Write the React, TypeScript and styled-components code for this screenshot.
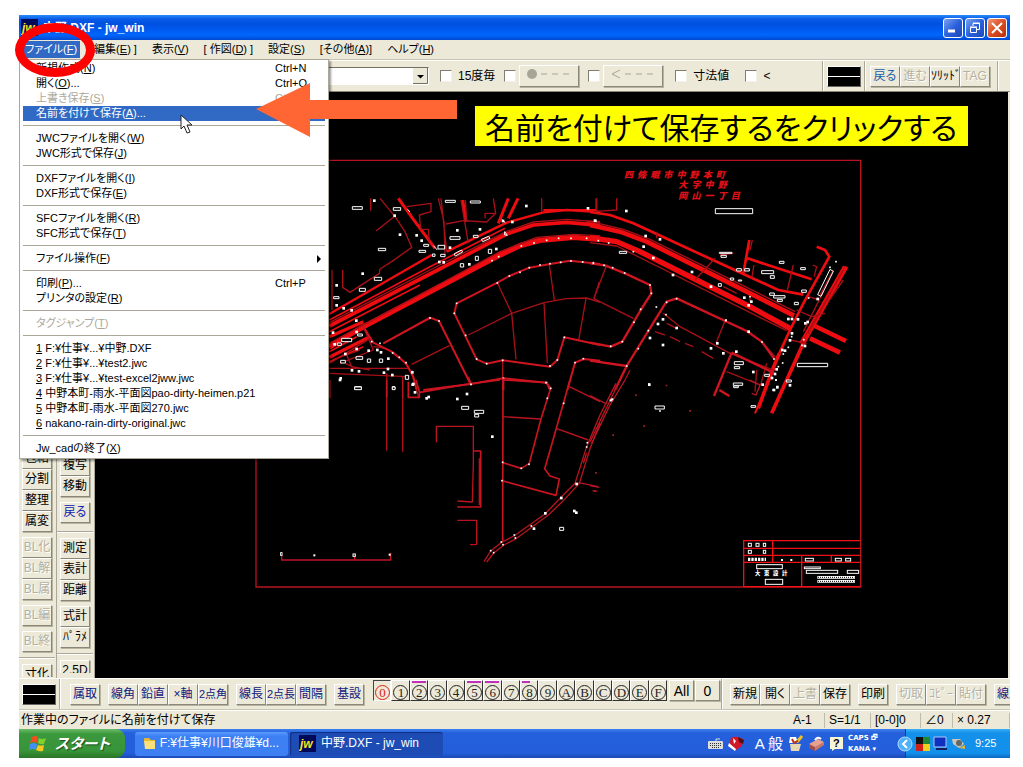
import React from 'react';
import styled, { createGlobalStyle, css } from 'styled-components';

const GlobalStyle = createGlobalStyle`
  *, *::before, *::after { box-sizing: border-box; }
  body {
    margin: 0;
    background: #fff;
    color: #000;
    font: 11px/15px "Liberation Sans", "Noto Sans CJK JP", sans-serif;
    font-feature-settings: "palt";
  }
  button, input, select { font: inherit; color: inherit; font-feature-settings: inherit; margin: 0; }
`;

const face = '#ece9d8';

const Page = styled.main`
  min-height: 100vh;
  padding: 15px 13px 9px 19px;
  display: flex;
  flex-direction: column;
`;
const Win = styled.div`
  position: relative;
  flex: 1;
  display: flex;
  flex-direction: column;
  background: ${face};
`;

/* ---------- title bar ---------- */
const TitleBar = styled.header`
  display: flex;
  align-items: center;
  gap: 5px;
  height: 25px;
  padding: 0 3px 0 2px;
  color: #fff;
  background: linear-gradient(#2b8cf8 0, #0a5ce8 4px, #0050e0 9px, #0058ee 14px, #0066fc 20px, #0048d0 25px);
`;
const Title = styled.h1`
  flex: 1;
  margin: 0;
  font: bold 12px/16px "Liberation Sans", "Noto Sans CJK JP", sans-serif;
`;
const Caption = styled.button<{ $red?: boolean }>`
  width: 20px;
  height: 20px;
  margin-left: -3px;
  padding: 0;
  display: grid;
  place-items: center;
  border: 1px solid #fff;
  border-radius: 3px;
  background: ${p => (p.$red
    ? 'linear-gradient(135deg, #f09878, #dc4c22 50%, #b83008)'
    : 'linear-gradient(135deg, #7ba2f0, #2b61dc 50%, #1c48b8)')};
`;
const Badge = styled.svg`display: block; flex: none;`;

/* ---------- menu bar ---------- */
const MenuBar = styled.nav`
  position: relative;
  display: flex;
  align-items: center;
  gap: 15px;
  height: 20px;
  padding-left: 3px;
  border-bottom: 1px solid #c8c4b4;
`;
const MenuTitle = styled.button<{ $open?: boolean }>`
  height: 17px;
  padding: 0;
  border: 0;
  background: none;
  white-space: nowrap;
  ${p => p.$open && css`
    width: 58px;
    margin-right: -7px;
    padding-left: 3px;
    text-align: left;
    background: #316ac5;
    color: #fff;
  `}
`;
const Menu = styled.ul`
  position: absolute;
  z-index: 2;
  left: 0;
  top: 19px;
  width: 310px;
  margin: 0;
  padding: 1px 3px 2px;
  list-style: none;
  background: #fff;
  border: 1px solid #aca899;
  box-shadow: 2px 2px 2px #0006;
`;
const Rule = styled.li`
  height: 10px;
  padding-top: 4px;
  &::after { content: ''; display: block; border-top: 1px solid #aca899; }
`;
const MenuItem = styled.button<{ $hot?: boolean }>`
  display: flex;
  width: 100%;
  height: 15px;
  padding: 0 3px 0 13px;
  border: 0;
  text-align: left;
  white-space: nowrap;
  background: ${p => (p.$hot ? '#316ac5' : 'none')};
  color: ${p => (p.$hot ? '#fff' : '#000')};
  &:disabled { color: #aca899; }
`;
const ItemName = styled.span`flex: 1;`;
const Shortcut = styled.span`width: 47px;`;
const SubArrow = styled.svg`margin-top: 4px;`;

/* ---------- tool bars ---------- */
const raised = css`
  border: 1px solid;
  border-color: #fff #8a8778 #8a8778 #fff;
  box-shadow: 1px 1px 0 #b8b4a2;
`;
const ToolBar = styled.div`
  display: flex;
  align-items: center;
  height: 32px;
  border-top: 1px solid #fff;
  border-bottom: 1px solid #8a8778;
`;
const Spacer = styled.div`flex: 1;`;
const Divider = styled.span`
  flex: none;
  align-self: stretch;
  width: 2px;
  border-left: 1px solid #aca899;
  border-right: 1px solid #fff;
`;
const Combo = styled.div`
  position: relative;
  width: 309px;
  margin: 0 11px 0 101px;
`;
const Select = styled.select`
  display: block;
  width: 100%;
  height: 18px;
  appearance: none;
  border: 1px solid;
  border-color: #716f64 #fff #fff #716f64;
  border-radius: 0;
  background: #fff;
`;
const DropMark = styled.svg`
  position: absolute;
  right: 1px;
  top: 1px;
  pointer-events: none;
`;
const Check = styled.label`
  display: flex;
  align-items: center;
  gap: 6px;
  white-space: nowrap;
  font-size: 12px;
`;
const Box = styled.input`
  appearance: none;
  width: 12px;
  height: 12px;
  background: #fff;
  border: 1px solid;
  border-color: #807e70 #f4f2e8 #f4f2e8 #807e70;
`;
const CheckSet = styled.div`
  display: flex;
  align-items: center;
  gap: 9px;
`;
const WithTool = styled.div`
  display: flex;
  align-items: center;
  gap: 3px;
`;
const Mode = styled.button`
  ${raised}
  width: 60px;
  height: 22px;
  padding: 0 6px;
  background: ${face};
`;
const Swatch = styled.button`
  flex: none;
  width: 34px;
  height: 21px;
  margin: 0 3px;
  padding: 0;
  border: 1px solid;
  border-color: #fff #666 #666 #fff;
  background: linear-gradient(#000 9px, #fff 9px, #fff 10px, #000 10px);
`;
const Tool = styled.button<{ $ink?: string; $small?: boolean }>`
  ${raised}
  flex: none;
  width: 30px;
  height: 21px;
  padding: 0;
  overflow: hidden;
  white-space: nowrap;
  text-align: center;
  font-size: ${p => (p.$small ? 11 : 12)}px;
  background: ${face};
  color: ${p => p.$ink || '#000'};
  &:disabled { color: #b4b1a2; text-shadow: 1px 1px #fff; }
`;
const Group = styled.div<{ $left?: number }>`
  flex: none;
  display: flex;
  margin-left: ${p => p.$left ?? 8}px;
`;
const EdgeGroup = styled(Group)`
  align-self: stretch;
  margin-right: 11px;
`;

/* ---------- work area ---------- */
const Work = styled.div`
  display: flex;
  flex: 1;
`;
const Column = styled.div<{ $top: number }>`
  flex: none;
  width: 38px;
  padding: ${p => p.$top}px 0 0 3px;
  border-right: 1px solid #aca899;
  display: flex;
  flex-direction: column;
`;
const Stack = styled.div<{ $after?: number }>`
  display: flex;
  flex-direction: column;
  margin-bottom: ${p => p.$after ?? 5}px;
`;
const Line = styled.hr`
  width: 36px;
  height: 2px;
  margin: 0 0 5px -3px;
  border: 0;
  border-top: 1px solid #aca899;
  background: #fff;
`;
const Cut = styled.div`
  height: 13px;
  overflow: hidden;
`;
const Canvas = styled.section`
  flex: 1;
  min-width: 0;
  margin-right: 2px;
  background: #000;
`;
const Plan = styled.svg`
  display: block;
  width: 100%;
`;

/* ---------- bottom bars ---------- */
const BottomBar = styled.div`
  display: flex;
  align-items: center;
  height: 32px;
  overflow: hidden;
  border-top: 1px solid #fff;
  border-bottom: 1px solid #c8c4b4;
`;
const Layers = styled.div`
  flex: none;
  display: grid;
  grid-template-columns: repeat(16, 1fr);
  width: 294px;
  align-self: flex-start;
  margin: 1px 2px 0 3px;
`;
const Layer = styled.button<{ $mark?: number; $on?: boolean }>`
  position: relative;
  height: 21px;
  padding: 3px 0 0 1px;
  border: 1px solid;
  border-color: ${p => (p.$on ? '#444 #fff #fff #444' : '#fff #333 #333 #fff')};
  background: ${face};
  color: ${p => (p.$on ? '#e02010' : '#222')};
  &::before {
    content: '';
    position: absolute;
    left: 1px;
    top: 0;
    width: ${p => p.$mark || 0}px;
    height: 2px;
    background: #c030b8;
  }
`;
const Ring = styled.span`
  display: block;
  width: 15px;
  height: 15px;
  border: 1px solid;
  border-radius: 50%;
  text-align: center;
  font: 13px/13px "Liberation Serif", serif;
`;
const Wide = styled(Tool)`
  width: 25px;
  margin-right: 1px;
  align-self: flex-start;
  margin-top: 1px;
  font: 14px/16px "Liberation Sans", sans-serif;
`;
const StatusBar = styled.footer`
  display: flex;
  align-items: center;
  height: 19px;
  padding-left: 2px;
  border-top: 1px solid #fff;
  font-size: 12px;
`;
const Cell = styled.span<{ $w: number }>`
  width: ${p => p.$w}px;
  padding-left: 4px;
  border-right: 1px solid #c0bcac;
  white-space: nowrap;
`;
const TaskBar = styled.div`
  display: flex;
  align-items: center;
  height: 29px;
  color: #fff;
  background: linear-gradient(#3c80f0 0, #2560dc 4px, #245edb 24px, #1c48b0 29px);
`;
const Start = styled.button`
  display: flex;
  align-items: center;
  gap: 8px;
  width: 106px;
  height: 29px;
  padding: 0 0 0 10px;
  border: 0;
  border-radius: 0 9px 9px 0;
  color: #fff;
  font: italic bold 15px/20px "Liberation Sans", "Noto Sans CJK JP", sans-serif;
  font-feature-settings: "palt";
  text-shadow: 1px 1px 1px #1c4c1c;
  background: linear-gradient(#6cbc68 0, #3c983c 5px, #389438 22px, #2a7428 29px);
`;
const Task = styled.button<{ $on?: boolean }>`
  display: flex;
  align-items: center;
  gap: 5px;
  width: 153px;
  height: 24px;
  margin-left: ${p => (p.$on ? 2 : 10)}px;
  padding: 0 9px;
  border: 0;
  border-radius: 3px;
  white-space: nowrap;
  color: #fff;
  font-size: 12px;
  background: ${p => (p.$on ? '#1c4cb4' : 'linear-gradient(#5c9cfc, #3c80f4 4px, #3c80f4)')};
  box-shadow: ${p => (p.$on ? 'inset 1px 1px 1px #103080' : 'none')};
`;
const Ime = styled.div`
  display: flex;
  align-items: center;
  gap: 5px;
  margin-right: 21px;
`;
const ImeMode = styled.span`
  margin-left: 5px;
  font-size: 15px;
`;
const Locks = styled.span`
  width: 36px;
  font: bold 7px/11px "DejaVu Sans", sans-serif;
  white-space: nowrap;
`;
const Tray = styled.div`
  display: flex;
  align-items: center;
  gap: 3px;
  width: 105px;
  height: 29px;
  background: linear-gradient(#38b0f8 0, #1490e8 4px, #1290ec 24px, #0c68c0 29px);
  border-left: 1px solid #0c3c98;
`;
const Chevron = styled.svg`margin-left: -9px;`;
const Clock = styled.time`margin-left: 6px;`;

/* ---------- annotations ---------- */
const Oval = styled.div`
  position: absolute;
  z-index: 4;
  left: -4px;
  top: 8px;
  width: 80px;
  height: 54px;
  border: 9px solid #f00;
  border-radius: 50%;
  pointer-events: none;
`;
const Arrow = styled.svg`
  position: absolute;
  z-index: 4;
  left: 237px;
  top: 68px;
`;
const Pointer = styled.svg`
  position: absolute;
  z-index: 5;
  left: 161px;
  top: 99px;
`;
const Note = styled.p`
  position: absolute;
  z-index: 3;
  left: 456px;
  top: 91px;
  width: 493px;
  height: 40px;
  margin: 0;
  padding-left: 10px;
  background: #ff0;
  font: 30px/40px "Noto Sans CJK JP", sans-serif;
  font-feature-settings: "palt";
  white-space: nowrap;
`;

type Entry = { name: string; k?: string; tail?: string; keys?: string; off?: boolean; hot?: boolean; sub?: boolean; pre?: boolean };
const entries: (Entry | null)[] = [
  { name: '新規作成', k: 'N', keys: 'Ctrl+N' },
  { name: '開く', k: 'O', tail: '...', keys: 'Ctrl+O' },
  { name: '上書き保存', k: 'S', keys: 'Ctrl+S', off: true },
  { name: '名前を付けて保存', k: 'A', tail: '...', hot: true },
  null,
  { name: 'JWCファイルを開く', k: 'W' },
  { name: 'JWC形式で保存', k: 'J' },
  null,
  { name: 'DXFファイルを開く', k: 'I' },
  { name: 'DXF形式で保存', k: 'E' },
  null,
  { name: 'SFCファイルを開く', k: 'R' },
  { name: 'SFC形式で保存', k: 'T' },
  null,
  { name: 'ファイル操作', k: 'F', sub: true },
  null,
  { name: '印刷', k: 'P', tail: '...', keys: 'Ctrl+P' },
  { name: 'プリンタの設定', k: 'R' },
  null,
  { name: 'タグジャンプ', k: 'T', off: true },
  null,
  { name: ' F:¥仕事¥...¥中野.DXF', k: '1', pre: true },
  { name: ' F:¥仕事¥...¥test2.jwc', k: '2', pre: true },
  { name: ' F:¥仕事¥...¥test-excel2jww.jwc', k: '3', pre: true },
  { name: ' 中野本町-雨水-平面図pao-dirty-heimen.p21', k: '4', pre: true },
  { name: ' 中野本町-雨水-平面図270.jwc', k: '5', pre: true },
  { name: ' nakano-rain-dirty-original.jwc', k: '6', pre: true },
  null,
  { name: 'Jw_cadの終了', k: 'X' },
];

const JwIcon = () => (
  <Badge width="17" height="17" viewBox="0 0 17 17">
    <rect width="17" height="17" fill="#000858" />
    <text x="1" y="13" fill="#ffe020" fontFamily="Liberation Sans, sans-serif" fontWeight="bold" fontStyle="italic" fontSize="12">jw</text>
  </Badge>
);

const Tools = ({ names, off, ink }: { names: string[]; off?: boolean; ink?: string }) => (
  <>{names.map(n => <Tool key={n} disabled={off} $ink={ink} $small={n.startsWith('2点')}>{n}</Tool>)}</>
);

type Rect = [number, number, number, number];
const Tags = ({ list }: { list: Rect[] }) => (
  <g fill="#000" stroke="#fff" strokeWidth="3">
    {list.map(([x, y, w, h], i) => <rect key={i} x={x} y={y} width={w} height={h} />)}
  </g>
);
const Dots = ({ list, size = 6 }: { list: [number, number][]; size?: number }) => (
  <g fill="#fff">
    {list.map(([x, y], i) => <rect key={i} x={x - size / 2} y={y - size / 2} width={size} height={size} />)}
  </g>
);

const SitePlan = () => (
  <Plan viewBox="0 0 2739 1758" role="img" aria-label="中野 平面図">
    <g fill="none" stroke="#c01424" strokeWidth="4">
      <path d="M483 205H2297V1485H483Z" stroke="#b81420" />
      <path d="M560 1385V1404H887V1383M779 1390V1404" />
    </g>
    <Tags list={[[557, 1382, 4, 8], [774, 1386, 7, 7]]} />
    <Dots list={[[658, 1390], [884, 1388]]} />

    {/* north-west sheet */}
    <g transform="translate(675 174)" fill="none" strokeLinejoin="round">
      <g stroke="#ee0c10">
        <path strokeWidth="7" d="M28 492L335 315M380 305L560 218 670 187 740 180 840 186" />
        <path strokeWidth="11" d="M28 528L330 372 560 252 640 225 740 217 840 226" />
        <path strokeWidth="16" d="M28 592L60 570 140 525 540 315 600 287 660 271 760 262 840 268" />
        <path strokeWidth="10" d="M28 560L130 515M28 622L150 560" />
        <path strokeWidth="5" d="M28 510L330 350 555 235M28 545L300 405M28 635L130 590M28 605L110 560" />
        <path strokeWidth="9" d="M565 145L535 220M594 145L565 205M235 145L285 215 345 295M428 150L438 215" />
        <path strokeWidth="6" d="M670 180H830M800 215H840" />
      </g>
      <g stroke="#a81018" strokeWidth="4">
        <path d="M28 518L330 360 560 244 640 216 740 208 840 216M28 580L540 305 650 262 760 253 840 257" />
        <path d="M180 145L225 200 255 245 275 292 215 335 180 357 178 370 90 427 68 412V360M36 360V480M168 243L222 200M152 145V182" />
        <path d="M260 170L333 160V185L298 195 302 238H325L328 275M355 145L372 215 375 315M363 145L380 305M423 150L445 280M436 150L440 215M378 222L430 212 500 216 527 190 520 145M495 205V190H525M665 145V185M830 145V178" />
        <path d="M532 398L575 490 588 628M575 490L445 555M575 490L672 458 738 446 800 444 840 457M672 458L682 640M798 446L776 570M688 345L703 450M838 395L822 446M190 580L330 505M275 643L388 587" />
        <path d="M28 655H265M28 670L265 680M200 670V902M248 680V905M160 590Q230 590 275 670L297 745M60 640L160 600 130 530M75 640L110 655M120 600L80 615 95 650 150 660" />
        <path d="M548 630V720M28 640L150 565 160 578" />
      </g>
      <g stroke="#d01420" strokeWidth="6">
        <path d="M410 460L532 398 568 378 628 353 690 342 750 332 840 342M410 460L403 490 470 628 500 641 548 631 690 650 712 630 733 562 840 585" />
        <path d="M130 530L160 578 215 605 258 640 280 680 290 720M190 580L330 503 357 513 453 705M310 720L453 702 550 685 680 698 690 720M742 720L765 638 792 627 840 632M550 685V720" />
      </g>
      <Tags list={[[97, 170, 30, 8], [220, 173, 22, 8], [376, 151, 30, 6], [451, 153, 30, 6], [175, 295, 22, 7], [163, 382, 22, 9], [118, 415, 18, 9], [390, 260, 30, 8], [354, 286, 20, 11], [297, 301, 20, 6], [311, 283, 15, 6], [421, 341, 10, 10], [466, 319, 9, 12], [505, 298, 10, 12], [41, 440, 16, 6], [65, 565, 30, 10], [108, 620, 20, 8], [142, 627, 10, 10], [178, 627, 10, 10], [62, 631, 14, 8], [104, 710, 20, 8], [217, 710, 8, 8], [460, 256, 14, 6], [362, 313, 13, 7], [52, 579, 12, 7], [256, 676, 10, 12], [113, 552, 14, 6], [337, 312, 8, 7]]} />
      <g stroke="#fff" strokeWidth="3"><path d="M402 312L424 300 428 306 406 318ZM484 268L506 259 510 265 488 275ZM340 287L352 300M554 245L562 256 554 255ZM545 208L556 218M263 178L270 186" /></g>
      <Dots size={8} list={[[163, 152], [240, 254], [290, 256], [305, 272], [128, 371], [50, 406], [50, 466], [71, 475], [95, 481], [109, 512], [39, 548], [412, 241], [480, 238], [529, 297], [619, 168], [804, 175], [549, 213], [577, 216], [390, 293], [448, 343], [358, 336], [371, 337], [172, 600], [183, 607], [205, 626], [62, 685], [96, 661], [117, 664], [192, 668], [204, 657], [217, 675], [277, 667], [280, 702], [110, 546], [110, 597], [146, 602], [76, 612], [44, 583], [224, 197], [826, 213]]} />
      <Dots size={5} list={[[568, 378], [600, 367], [628, 353], [660, 345], [690, 341], [722, 337], [753, 333], [788, 336], [820, 338], [532, 399], [410, 460], [403, 490], [437, 556], [470, 627], [500, 641], [548, 631], [690, 648], [712, 630], [733, 562], [330, 504], [357, 513], [453, 703], [550, 685], [680, 698], [765, 638], [790, 626], [218, 609], [238, 622], [258, 638], [276, 665], [180, 580], [155, 575], [604, 288], [642, 279], [680, 271], [716, 265], [753, 265], [800, 265], [516, 332], [536, 320]]} />
    </g>

    {/* north-east sheet */}
    <g transform="translate(1485 174)" fill="none" strokeLinejoin="round">
      <g stroke="#ee0c10">
        <path strokeWidth="8" d="M0 186L60 195 130 220 460 372 565 420 640 434" />
        <path strokeWidth="14" d="M0 225L90 245 170 275 470 425 612 497" />
        <path strokeWidth="16" d="M0 263L80 275 150 305 320 390 480 470 600 535" />
        <path strokeWidth="14" d="M668 525L768 573M660 565L750 608" />
        <path strokeWidth="8" d="M478 270L460 370M680 290L705 300 718 320 640 460 600 540 568 610M472 325L665 388" />
        <path strokeWidth="11" d="M568 610L545 665 505 775M770 350L640 580 545 790" />
        <path strokeWidth="6" d="M553 655L495 790M762 348L630 580" />
      </g>
      <g stroke="#a81018" strokeWidth="4">
        <path d="M0 214L100 238 180 268 470 412 615 485M0 278L80 288 140 318 590 542M18 145V180M80 145V180L10 185M200 245V265M375 325L315 390M390 315L430 310M487 270L480 300M492 345L485 385M610 345L592 420M668 345L680 350 672 380M600 570L650 580M620 480L665 500 705 490M480 440V455M760 360L655 550M730 360L690 435M700 425L640 545M655 440L690 450" />
        <path d="M220 490L270 530 420 610 550 660M405 512L378 580M410 665L510 705M512 705L530 640M10 445L130 505M48 350L12 445M195 545L225 555M260 535L230 520M240 560L270 575M285 580L310 590M335 605L370 625M120 660L105 690M760 390L715 455M400 410L440 430M515 575L555 620M500 660L495 725" />
      </g>
      <g stroke="#d01420" strokeWidth="7">
        <path d="M0 340L45 346 105 370 180 405 184 430 152 480 97 575 62 590 0 578M0 632L110 648M75 720L110 648 220 470 230 455 260 445 470 543 515 575 552 625M425 608L372 738M425 608L550 668M388 720L418 738" />
      </g>
      <Tags list={[[376, 176, 112, 15], [88, 304, 22, 6], [388, 307, 38, 3], [393, 316, 16, 6], [440, 356, 14, 7], [464, 356, 14, 7], [515, 362, 36, 9], [541, 377, 12, 8], [568, 334, 14, 6], [632, 353, 14, 6], [539, 429, 14, 7], [551, 437, 34, 7], [562, 448, 15, 6], [635, 420, 14, 7], [613, 457, 12, 7], [622, 640, 91, 10], [433, 635, 27, 9], [433, 650, 16, 6], [430, 699, 28, 7], [431, 708, 14, 5], [445, 390, 10, 3], [421, 384, 10, 6], [524, 673, 14, 6], [589, 690, 15, 6], [385, 401, 9, 8], [195, 768, 28, 9], [483, 767, 14, 5]]} />
      <g stroke="#fff" strokeWidth="3"><path d="M683 434L720 358 730 364 693 439Z" /></g>
      <Dots size={8} list={[[109, 183], [167, 258], [210, 268], [161, 290], [190, 324], [306, 366], [249, 375], [363, 410], [463, 443], [484, 455], [476, 466], [204, 522], [219, 508], [260, 534], [180, 564], [219, 585], [363, 595], [400, 610], [439, 605], [382, 580], [476, 545], [178, 704], [490, 666], [555, 672], [560, 658], [606, 507], [595, 507], [624, 508], [646, 520], [653, 516], [577, 600], [585, 602], [600, 571], [606, 550], [645, 588], [683, 447], [518, 704], [546, 684], [65, 750], [562, 712], [15, 212], [600, 706], [552, 720]]} />
      <Dots size={5} list={[[10, 340], [42, 346], [68, 353], [104, 369], [180, 405], [184, 430], [152, 478], [132, 517], [97, 575], [62, 589], [110, 648], [145, 596], [175, 542], [230, 457], [260, 446], [199, 471], [407, 512], [516, 576], [552, 627], [605, 560], [595, 592], [580, 612], [565, 650], [578, 639], [656, 444], [720, 352], [738, 335], [480, 440], [641, 569], [636, 586], [228, 494], [408, 510], [210, 783], [130, 305], [25, 272], [56, 279]]} />
      <g fill="#e01018" fontFamily="Noto Sans CJK JP, sans-serif" fontWeight="900" fontStyle="italic" fontSize="27">
        <text x="102" y="84">四&#160;&#160;條&#160;&#160;畷&#160;&#160;市&#160;&#160;中&#160;&#160;野&#160;&#160;本&#160;&#160;町</text>
        <text x="265" y="114">大&#160;&#160;字&#160;&#160;中&#160;&#160;野</text>
        <text x="265" y="146">岡&#160;&#160;山&#160;&#160;一&#160;&#160;丁&#160;&#160;目</text>
      </g>
    </g>

    {/* south-west sheet */}
    <g transform="translate(675 864)" fill="none" strokeLinejoin="round">
      <g stroke="#c81420" strokeWidth="5">
        <path d="M549 -5L548 485M550 0L680 8 692 25 662 120 628 250 604 265 548 248M545 302L708 346 718 297 690 288 674 266 692 205 750 0M300 37L445 12 540 0M445 -10L453 12M462 213H482V381H412M265 5V52H298V35L288 0M200 0V52" />
      </g>
      <g stroke="#b81420" strokeWidth="4">
        <path d="M349 187V139H460V250L457 366 412 363M412 421H470V493L450 494M478 235V375M548 110L662 117M708 145L805 180M748 20L840 65M248 0V55M30 0V55" />
        <path d="M888 10L840 105 800 200 765 310 720 355 675 402 582 468 545 487 512 513 492 545M840 130L812 200 778 310 730 362 685 405 590 475 552 495 520 520 500 546" />
        <path d="M775 308L835 320M818 332L830 334M800 220L790 250" />
      </g>
      <Tags list={[[425, 79, 21, 9], [463, 91, 28, 9], [464, 103, 12, 8], [719, 442, 12, 9], [104, 21, 20, 8], [217, 21, 8, 8]]} />
      <Dots size={8} list={[[320, 55], [326, 51], [412, 57], [441, 42], [517, 170], [763, 393], [769, 398], [642, 446], [724, 354], [770, 312], [676, 400], [285, 37], [278, 14], [60, 0]]} />
      <Dots size={5} list={[[453, 13], [548, 247], [604, 265], [627, 253], [546, 302], [544, 486], [549, 494], [583, 465], [586, 474], [634, 438], [512, 512], [521, 518], [802, 188], [800, 201], [731, 70], [692, 25], [682, 55], [678, 8]]} />
    </g>

    {/* south-east sheet with the title block */}
    <g transform="translate(1485 864)" fill="none">
      <g stroke="#b81824" strokeWidth="4">
        <path d="M90 0L0 185M105 0L60 75 5 190M0 47L50 72M0 317L28 322M10 332L20 334M480 0L510 15 498 45 485 40" />
      </g>
      <path stroke="#f01018" strokeWidth="4" d="M461 620V482H811M461 505H811M461 526H811M461 547H811M548 482V547M635 526V620M724 526V547M461 620H811" />
      <g fill="#a82020"><path d="M227 14h5v5h-5zM135 43h5v5h-5zM298 90h5v5h-5zM160 136h5v5h-5zM67 163h5v5h-5zM15 276h5v5h-5z" /></g>
      <Tags list={[[475, 490, 9, 9], [498, 490, 9, 9], [520, 490, 7, 9], [475, 511, 9, 9], [520, 511, 7, 9], [500, 554, 77, 12], [526, 598, 52, 15], [646, 535, 24, 8], [643, 561, 48, 5], [649, 571, 94, 9], [736, 535, 18, 8], [767, 535, 15, 8], [772, 571, 34, 9]]} />
      <path stroke="#fff" strokeWidth="10" strokeDasharray="7 3" d="M474 538H528" />
      <path stroke="#fff" strokeWidth="8" d="M682 592H795M682 604H795" />
      <path stroke="#000" strokeWidth="3" strokeDasharray="3 3" d="M684 592H793M684 604H793" />
      <Dots list={[[576, 540], [604, 540], [558, 0], [550, 30], [562, 20], [177, 13], [62, 61], [67, 58]]} />
      <text x="495" y="585" fill="#fff" fontFamily="Noto Sans CJK JP, sans-serif" fontWeight="900" fontSize="16">大&#160;&#160;&#160;東&#160;&#160;&#160;設&#160;&#160;&#160;計</text>
    </g>
  </Plan>
);

const marks: Record<string, number> = { '2': 14, '5': 14, '6': 14, '8': 8 };

export default function App() {
  return (
    <Page>
      <GlobalStyle />
      <Win>
        <TitleBar>
          <JwIcon />
          <Title>中野.DXF - jw_win</Title>
          <Caption aria-label="最小化"><svg width="12" height="12"><path d="M1 9h7" stroke="#fff" strokeWidth="3" /></svg></Caption>
          <Caption aria-label="元に戻す"><svg width="12" height="12" fill="none" stroke="#fff"><path d="M4 4V1.5H10.500V7.500H8M1.500 5.500H7.500V10.500H1.500ZM1 5h7M4 1h7" /></svg></Caption>
          <Caption $red aria-label="閉じる"><svg width="12" height="12"><path d="M1 1L11 11M11 1L1 11" stroke="#fff" strokeWidth="2" /></svg></Caption>
        </TitleBar>

        <MenuBar>
          <MenuTitle $open>ファイル(<u>F</u>)</MenuTitle>
          <MenuTitle>[ 編集(<u>E</u>) ]</MenuTitle>
          <MenuTitle>表示(<u>V</u>)</MenuTitle>
          <MenuTitle>[ 作図(<u>D</u>) ]</MenuTitle>
          <MenuTitle>設定(<u>S</u>)</MenuTitle>
          <MenuTitle>[その他(<u>A</u>)]</MenuTitle>
          <MenuTitle>ヘルプ(<u>H</u>)</MenuTitle>
          <Menu>
            {entries.map((e, i) => (e === null ? <Rule key={i} /> : (
              <li key={i}>
                <MenuItem disabled={e.off} $hot={e.hot}>
                  <ItemName>{e.pre ? <><u>{e.k}</u>{e.name}</> : <>{e.name}(<u>{e.k}</u>){e.tail}</>}</ItemName>
                  {e.keys && <Shortcut>{e.keys}</Shortcut>}
                  {e.sub && <SubArrow width="5" height="8"><path d="M0 0L4 4 0 8Z" /></SubArrow>}
                </MenuItem>
              </li>
            )))}
          </Menu>
        </MenuBar>

        <ToolBar>
          <Combo>
            <Select aria-label="傾き"><option> </option></Select>
            <DropMark width="15" height="16">
              <path d="M0 0H15V16H0Z" fill={face} /><path d="M0 15.500H14.500V0" fill="none" stroke="#716f64" /><path d="M4 7H11L7.500 10.500Z" />
            </DropMark>
          </Combo>
          <CheckSet>
            <Check><Box type="checkbox" />15度毎</Check>
            <WithTool>
              <Box type="checkbox" aria-label="●---" />
              <Mode aria-label="始点マーク"><svg width="46" height="12"><circle cx="6" cy="6" r="5" fill="#a8a596" /><path d="M15 6h6M26 6h6M37 6h6" stroke="#a8a596" /></svg></Mode>
            </WithTool>
            <WithTool>
              <Box type="checkbox" aria-label="<---" />
              <Mode aria-label="矢印"><svg width="46" height="12"><path d="M10 2L2 6 10 10M15 6h6M26 6h6M37 6h6" fill="none" stroke="#a8a596" /></svg></Mode>
            </WithTool>
          </CheckSet>
          <Group $left={12}><Check><Box type="checkbox" />寸法値</Check></Group>
          <Group $left={16}><Check><Box type="checkbox" />&lt;</Check></Group>
          <Spacer />
          <Divider />
          <Swatch aria-label="線属性" />
          <Divider />
          <Group $left={4}>
            <Tool $ink="#2060a8">戻る</Tool>
            <Tool disabled>進む</Tool>
            <Tool>ｿﾘｯﾄﾞ</Tool>
            <Tool disabled>TAG</Tool>
          </Group>
          <EdgeGroup $left={7}><Divider /></EdgeGroup>
        </ToolBar>

        <Work>
          <Column $top={356}>
            <Stack><Tools names={['包絡', '分割', '整理', '属変']} /></Stack>
            <Stack><Tools off names={['BL化', 'BL解', 'BL属']} /></Stack>
            <Stack><Tools off names={['BL編']} /></Stack>
            <Stack><Tools off names={['BL終']} /></Stack>
            <Line />
            <Cut><Tools names={['寸化']} /></Cut>
          </Column>
          <Column $top={363}>
            <Stack><Tools names={['複写', '移動']} /></Stack>
            <Stack $after={8}><Tools ink="#1020b0" names={['戻る']} /></Stack>
            <Line />
            <Stack><Tools names={['測定', '表計', '距離']} /></Stack>
            <Stack><Tools names={['式計', 'ﾊﾟﾗﾒ']} /></Stack>
            <Line />
            <Cut><Tools names={['2.5D']} /></Cut>
          </Column>
          <Canvas><SitePlan /></Canvas>
        </Work>

        <BottomBar>
          <Swatch aria-label="線属性" />
          <Divider />
          <Group $left={4}><Divider /></Group>
          <Group $left={3}><Tools ink="#101880" names={['属取']} /></Group>
          <Group><Tools ink="#101880" names={['線角', '鉛直', '×軸', '2点角']} /></Group>
          <Group><Tools ink="#101880" names={['線長', '2点長', '間隔']} /></Group>
          <Group><Tools ink="#101880" names={['基設']} /></Group>
          <Group $left={4}><Divider /></Group>
          <Layers>
            {'0123456789ABCDEF'.split('').map(n => (
              <Layer key={n} $on={n === '0'} $mark={marks[n]}><Ring>{n}</Ring></Layer>
            ))}
          </Layers>
          <Wide>All</Wide>
          <Wide>0</Wide>
          <Divider />
          <Group $left={7}>
            <Tools names={['新規', '開く']} />
            <Tools off names={['上書']} />
            <Tools names={['保存']} />
          </Group>
          <Group><Tools names={['印刷']} /></Group>
          <Group><Tools off names={['切取', 'ｺﾋﾟｰ', '貼付']} /></Group>
          <Group><Tools ink="#101880" names={['線属']} /></Group>
        </BottomBar>

        <StatusBar>
          作業中のファイルに名前を付けて保存
          <Spacer />
          <Cell $w={36}>A-1</Cell>
          <Cell $w={46}>S=1/1</Cell>
          <Cell $w={50}>[0-0]0</Cell>
          <Cell $w={32}>∠0</Cell>
          <Cell $w={57}>× 0.27</Cell>
        </StatusBar>

        <TaskBar>
          <Start>
            <svg width="18" height="18" viewBox="0 0 18 18">
              <path d="M3 2Q6 0 9 2L8 8Q5 6 1 8Z" fill="#f05020" />
              <path d="M10 3Q13 5 17 3L15 9Q12 10 9 8Z" fill="#80d030" />
              <path d="M1 9Q4 7 8 9L7 15Q4 13 0 15Z" fill="#4090f8" />
              <path d="M9 10Q12 11 15 10L14 16Q11 17 7 15Z" fill="#f8c820" />
            </svg>
            スタート
          </Start>
          <Task>
            <svg width="14" height="13"><path d="M0 2Q0 1 1 1H5L7 3H12V5H0Z" fill="#e8b830" /><path d="M0 4H14L13 12H1Z" fill="#fce078" /></svg>
            F:¥仕事¥川口俊雄¥d...
          </Task>
          <Task $on><JwIcon />中野.DXF - jw_win</Task>
          <Spacer />
          <Ime>
            <svg width="15" height="11"><rect x="0" y="3" width="15" height="8" rx="1" fill="#ddd" /><path d="M2 5.500H13M2 7.500H13M4 9.500H11" stroke="#333" strokeDasharray="1 1" /><path d="M8 3V1H12" fill="none" stroke="#ddd" /></svg>
            <svg width="17" height="17"><path d="M3 3Q8 0 15 4L14 11 8 15 1 9Z" fill="#d01828" /><path d="M1 8L8 14 7 16 0 11ZM5 3L8 6 6 9" fill="#fff" /><path d="M10 2L16 5 15 9 11 7Z" fill="#501018" /></svg>
            <ImeMode>A 般</ImeMode>
            <svg width="16" height="17"><path d="M2 9H13L11 16H3Z" fill="#e8d8b0" /><path d="M2 2H8L10 8H1Z" fill="#fff" /><path d="M9 7L14 1" stroke="#f0c020" strokeWidth="3" /><path d="M4 4L6 8 10 6" stroke="#c03020" strokeWidth="2" fill="none" /></svg>
            <svg width="16" height="15"><path d="M0 8L9 3 15 6 6 13Z" fill="#e8a090" /><path d="M0 8L6 11V15L0 12Z" fill="#a05048" /><path d="M6 11L15 6V9L6 15Z" fill="#c87868" /><path d="M6 4Q9 0 12 3" fill="none" stroke="#fff" strokeWidth="2" /></svg>
            <svg width="13" height="15"><path d="M0 1H13V13H5L2 15V13H0Z" fill="#f8f4d8" /><text x="3" y="11" fontFamily="Liberation Sans, sans-serif" fontWeight="bold" fontSize="11">?</text></svg>
            <Locks>CAPS 🗗<br />KANA ▾</Locks>
          </Ime>
          <Tray>
            <Chevron width="16" height="18"><circle cx="8" cy="9" r="7" fill="#50b0f8" stroke="#b0e0ff" /><path d="M10 5L6 9 10 13" fill="none" stroke="#fff" strokeWidth="2" /></Chevron>
            <svg width="14" height="14"><path d="M0 0H7V7H0Z" fill="#111" /><path d="M7 0H14V7H7Z" fill="#208830" /><path d="M0 7H7V14H0Z" fill="#d02018" /><path d="M7 7H14V14H7Z" fill="#f0d020" /></svg>
            <svg width="15" height="15"><path d="M1 1H13V11H1Z" fill="#1030c0" stroke="#a8c8f8" /><path d="M3 12H14V14H3Z" fill="#0c2060" /></svg>
            <svg width="15" height="15"><path d="M1 3H9L13 8 8 12 2 8Z" fill="#c8c8b8" /><circle cx="8" cy="7" r="3" fill="#666" /><path d="M8 12L14 13V9Z" fill="#e0b040" /></svg>
            <Clock>9:25</Clock>
          </Tray>
        </TaskBar>

        <Oval />
        <Arrow width="202" height="54"><path d="M0 26L54 0V17H201V36H54V54Z" fill="#ff6633" /></Arrow>
        <Pointer width="13" height="21"><path d="M1 1V15L4 12 7 19 10 18 7 11H12Z" fill="#fff" stroke="#222" /></Pointer>
        <Note>名前を付けて保存するをクリックする</Note>
      </Win>
    </Page>
  );
}
